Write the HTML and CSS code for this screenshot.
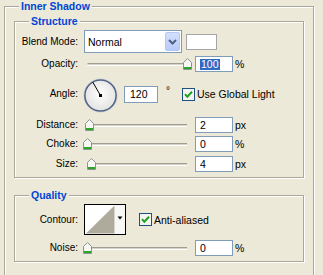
FILE: index.html
```html
<!DOCTYPE html>
<html lang="en">
<head>
    <meta charset="UTF-8">
    <title>Inner Shadow</title>
    <link rel="stylesheet" href="styles.css">
</head>
<body>

<fieldset class="panel">
    <legend class="title title-main">Inner Shadow</legend>

    <!-- Structure -->
    <fieldset class="group group-structure">
        <legend class="title">Structure</legend>

        <div class="row row-blend">
            <span class="lbl">Blend Mode:</span>
            <div class="select">
                <span class="select-text">Normal</span>
                <span class="select-btn">
                    <svg width="9" height="6" viewBox="0 0 9 6"><path d="M1 1 L4.5 4.5 L8 1" fill="none" stroke="#4d6185" stroke-width="2"/></svg>
                </span>
            </div>
            <span class="swatch"></span>
        </div>

        <div class="row row-opacity">
            <span class="lbl">Opacity:</span>
            <div class="slider">
                <span class="track"></span>
                <span class="thumb" style="left:100px"><svg width="9" height="12" viewBox="0 0 9 12"><path d="M0.5 4.5 L4.5 0.5 L8.5 4.5 V11.5 H0.5 Z" fill="#f6f6f2" stroke="#8b9296"/><rect x="1" y="9" width="7" height="2" fill="#2aa52a"/></svg></span>
            </div>
            <span class="field"><span class="sel">100</span></span>
            <span class="unit">%</span>
        </div>

        <div class="row row-angle">
            <span class="lbl">Angle:</span>
            <svg class="dial" width="35" height="35" viewBox="0 0 35 35">
                <defs>
                    <radialGradient id="dialFill" cx="50%" cy="45%" r="55%">
                        <stop offset="0" stop-color="#ffffff"/>
                        <stop offset="1" stop-color="#e2e2e0"/>
                    </radialGradient>
                </defs>
                <circle cx="17.5" cy="17.5" r="16.6" fill="none" stroke="#c8ccd6" stroke-width="0.8"/>
                <circle cx="17.5" cy="17.5" r="15.6" fill="url(#dialFill)" stroke="#4f6287" stroke-width="1.5"/>
                <line x1="17.5" y1="17.5" x2="9.8" y2="4.2" stroke="#000" stroke-width="1"/>
                <rect x="16" y="16" width="3" height="3" fill="#000"/>
            </svg>
            <span class="field field-angle">120</span>
            <span class="deg">°</span>
            <span class="check"><svg width="13" height="13" viewBox="0 0 13 13"><rect x="0.5" y="0.5" width="12" height="12" fill="#f4f4f0" stroke="#1c5180"/><path d="M3 6.2 L5.3 8.8 L10 3.8" fill="none" stroke="#21a121" stroke-width="2"/></svg></span>
            <span class="check-text">Use Global Light</span>
        </div>

        <div class="row row-distance">
            <span class="lbl">Distance:</span>
            <div class="slider">
                <span class="track"></span>
                <span class="thumb" style="left:2px"><svg width="9" height="12" viewBox="0 0 9 12"><path d="M0.5 4.5 L4.5 0.5 L8.5 4.5 V11.5 H0.5 Z" fill="#f6f6f2" stroke="#8b9296"/><rect x="1" y="9" width="7" height="2" fill="#2aa52a"/></svg></span>
            </div>
            <span class="field">2</span>
            <span class="unit">px</span>
        </div>

        <div class="row row-choke">
            <span class="lbl">Choke:</span>
            <div class="slider">
                <span class="track"></span>
                <span class="thumb" style="left:0px"><svg width="9" height="12" viewBox="0 0 9 12"><path d="M0.5 4.5 L4.5 0.5 L8.5 4.5 V11.5 H0.5 Z" fill="#f6f6f2" stroke="#8b9296"/><rect x="1" y="9" width="7" height="2" fill="#2aa52a"/></svg></span>
            </div>
            <span class="field">0</span>
            <span class="unit">%</span>
        </div>

        <div class="row row-size">
            <span class="lbl">Size:</span>
            <div class="slider">
                <span class="track"></span>
                <span class="thumb" style="left:4px"><svg width="9" height="12" viewBox="0 0 9 12"><path d="M0.5 4.5 L4.5 0.5 L8.5 4.5 V11.5 H0.5 Z" fill="#f6f6f2" stroke="#8b9296"/><rect x="1" y="9" width="7" height="2" fill="#2aa52a"/></svg></span>
            </div>
            <span class="field">4</span>
            <span class="unit">px</span>
        </div>
    </fieldset>

    <!-- Quality -->
    <fieldset class="group group-quality">
        <legend class="title">Quality</legend>

        <div class="row row-contour">
            <span class="lbl">Contour:</span>
            <svg class="contour" width="42" height="31" viewBox="0 0 42 31">
                <rect x="0.5" y="0.5" width="41" height="30" fill="#fff" stroke="#000"/>
                <polygon points="2,29.5 30.5,1.5 30.5,29.5" fill="#aeaa9c"/>
                <rect x="31" y="1" width="10" height="29" fill="#f7f7f5"/>
                <polygon points="33.5,12.5 38.5,12.5 36,15.5" fill="#000"/>
            </svg>
            <span class="check check-aa"><svg width="13" height="13" viewBox="0 0 13 13"><rect x="0.5" y="0.5" width="12" height="12" fill="#f4f4f0" stroke="#1c5180"/><path d="M3 6.2 L5.3 8.8 L10 3.8" fill="none" stroke="#21a121" stroke-width="2"/></svg></span>
            <span class="check-text">Anti-aliased</span>
        </div>

        <div class="row row-noise">
            <span class="lbl">Noise:</span>
            <div class="slider">
                <span class="track"></span>
                <span class="thumb" style="left:0px"><svg width="9" height="12" viewBox="0 0 9 12"><path d="M0.5 4.5 L4.5 0.5 L8.5 4.5 V11.5 H0.5 Z" fill="#f6f6f2" stroke="#8b9296"/><rect x="1" y="9" width="7" height="2" fill="#2aa52a"/></svg></span>
            </div>
            <span class="field">0</span>
            <span class="unit">%</span>
        </div>
    </fieldset>
</fieldset>

</body>
</html>
```

FILE: styles.css
```css
html, body {
    overflow: hidden;
}
body {
    margin: 0;
    background-color: #ece9d8;
    font-family: "Liberation Sans", Arial, sans-serif;
    font-size: 10px;
    color: #000;
}

/* etched group boxes */
fieldset {
    margin: 0;
    min-width: 0;
    border: 1px solid #aca899;
    box-shadow: 1px 1px 0 #fff, inset 1px 1px 0 #fff;
}
.panel {
    width: 310px;
    box-sizing: border-box;
    margin-left: 4px;
    padding: 2px 9px 30px 9px;
}
.group {
    padding: 2px 0 5px 0;
}
.group-quality {
    margin-top: 11px;
    padding: 2px 0 5px 0;
}

.title {
    font-size: 10.5px;
    font-weight: bold;
    line-height: 13px;
    color: #0046d5;
    padding: 0 2px;
    margin-left: 14px;
    background-color: #ece9d8;
}
.title-main {
    margin-left: 5px;
}

/* rows */
.row {
    display: flex;
    align-items: center;
    height: 16px;
}
.lbl {
    width: 63px;
    margin-right: 5px;
    text-align: right;
    white-space: nowrap;
    line-height: 12px;
}
.row-blend {
    height: 23px;
}
.row-opacity {
    margin-top: 3px;
}
.row-angle {
    margin-top: 6px;
    height: 32px;
}
.row-distance {
    margin-top: 7px;
}
.row-choke {
    margin-top: 3px;
}
.row-size {
    margin-top: 4px;
}
.row-contour {
    height: 31px;
}
.row-noise {
    margin-top: 5px;
}

/* blend mode drop down */
.select {
    display: flex;
    align-items: center;
    width: 98px;
    height: 23px;
    box-sizing: border-box;
    margin-left: 1px;
    border: 1px solid #7f9db9;
    background-color: #fff;
    font-size: 10.5px;
}
.select-text {
    flex: 1;
    padding-left: 3px;
}
.select-btn {
    display: flex;
    align-items: center;
    justify-content: center;
    width: 15px;
    height: 19px;
    box-sizing: border-box;
    margin-right: 1px;
    border: 1px solid #b5c7f3;
    border-radius: 2px;
    background: linear-gradient(#d3dffd, #b9cbfa);
}
.swatch {
    width: 31px;
    height: 16px;
    box-sizing: border-box;
    margin-left: 4px;
    border: 1px solid #a5a5a5;
    background-color: #fff;
}

/* sliders */
.slider {
    position: relative;
    width: 110px;
    height: 12px;
    margin-right: 2px;
}
.track {
    display: block;
    margin: 5px 6px 0 4px;
    height: 1px;
    border-top: 1px solid #a09d93;
    border-bottom: 1px solid #fff;
    border-radius: 2px 0 0 2px;
    background-color: #d6d3c8;
}
.thumb {
    position: absolute;
    top: 0;
    width: 9px;
    height: 12px;
    line-height: 0;
}

/* text fields */
.field {
    width: 38px;
    height: 16px;
    box-sizing: border-box;
    border: 1px solid #7f9db9;
    background-color: #fff;
    padding-left: 4px;
    line-height: 14px;
    font-size: 10.5px;
}
.sel {
    display: inline-block;
    padding: 0 1px;
    line-height: 11px;
    background-color: #316ac5;
    color: #fff;
}
.unit {
    margin-left: 2px;
    font-size: 10.5px;
}

/* angle */
.dial {
    margin-bottom: -3px;
    margin-right: 6px;
}
.field-angle {
    width: 34px;
    height: 17px;
    padding-left: 5px;
    line-height: 15px;
}
.deg {
    width: 24px;
    box-sizing: border-box;
    padding-left: 8px;
    align-self: flex-start;
    margin-top: 9px;
    line-height: 8px;
}
.check {
    width: 13px;
    height: 13px;
    line-height: 0;
    margin-right: 2px;
}
.check-text {
    white-space: nowrap;
    font-size: 10.5px;
}

/* quality */
.contour {
    margin-left: 1px;
}
.check-aa {
    margin-left: 13px;
}
```
